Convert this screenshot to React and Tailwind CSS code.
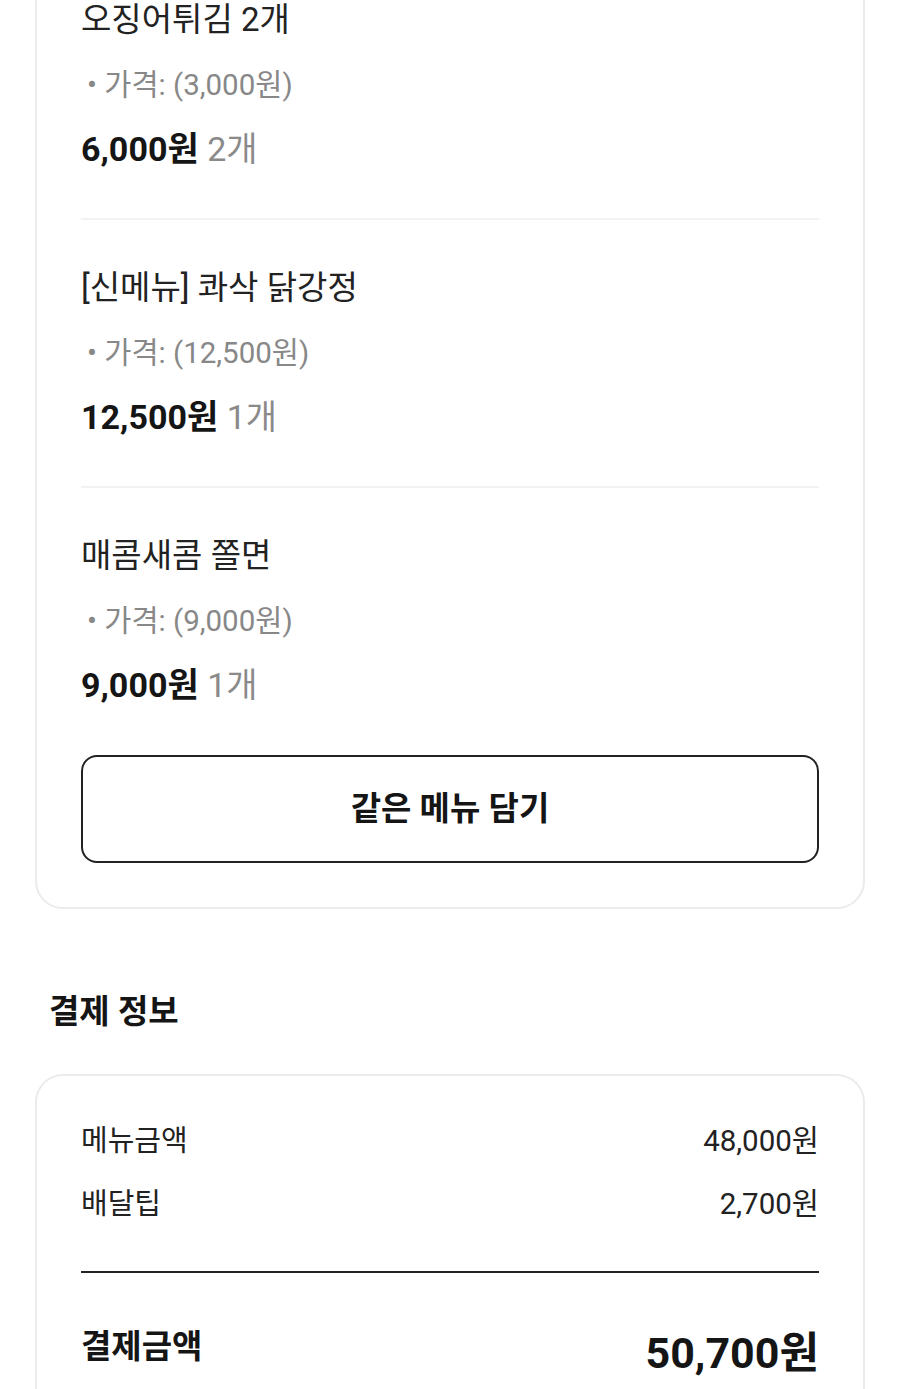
import React from "react";

const ITEMS = [
  { name: "오징어튀김 2개", unit: "3,000원", total: "6,000원", qty: "2개" },
  { name: "[신메뉴] 콰삭 닭강정", unit: "12,500원", total: "12,500원", qty: "1개" },
  { name: "매콤새콤 쫄면", unit: "9,000원", total: "9,000원", qty: "1개" },
];

const FONT = "font-['Roboto','Noto_Sans_CJK_KR',sans-serif]";

export default function App() {
  return (
    <div className={`min-h-screen bg-white px-[35px] ${FONT} text-[#222]`}>
      {/* Order card (scrolled past its top) */}
      <div className="-mt-[47px] rounded-[28px] border-2 border-[#ebebeb] px-[44px] pt-[45px] pb-[44px]">
        {ITEMS.map((item, i) => (
          <div
            key={item.name}
            className={`${i > 0 ? "border-t-2 border-[#f2f2f2] pt-[48px]" : ""} ${
              i < ITEMS.length - 1 ? "pb-[49px]" : ""
            }`}
          >
            <div className="text-[33px] leading-[40px] text-[#222]">{item.name}</div>
            <div className="mt-[25px] pl-[6px] text-[29.5px] leading-[40px] text-[#888]">
              • 가격: ({item.unit})
            </div>
            <div className="mt-[24px] text-[34px] leading-[40px]">
              <span className="font-bold text-[#151515]">{item.total}</span>{" "}
              <span className="text-[#8a8a8a]">{item.qty}</span>
            </div>
          </div>
        ))}

        <button className="mt-[50px] flex h-[108px] w-full items-center justify-center rounded-[16px] border-2 border-[#222] bg-white text-[33px] font-bold text-[#151515]">
          같은 메뉴 담기
        </button>
      </div>

      {/* Payment info */}
      <h2 className="mt-[83px] pl-[14px] text-[33px] font-bold leading-[40px] text-[#151515]">
        결제 정보
      </h2>

      <div className="mt-[42px] rounded-t-[28px] border-2 border-b-0 border-[#ebebeb] px-[44px] pt-[45px] pb-[40px]">
        <div className="flex items-center justify-between text-[29.5px] leading-[40px]">
          <span className="text-[29px]">메뉴금액</span>
          <span>48,000원</span>
        </div>
        <div className="mt-[23px] flex items-center justify-between text-[29.5px] leading-[40px]">
          <span className="text-[29px]">배달팁</span>
          <span>2,700원</span>
        </div>
        <div className="mt-[47px] h-[2px] bg-[#222]" />
        <div className="mt-[43px] flex items-center justify-between leading-[50px] text-[#151515]">
          <span className="text-[33px] font-bold">결제금액</span>
          <span className="mt-[12px] text-[43px] font-bold">50,700원</span>
        </div>
      </div>
    </div>
  );
}
